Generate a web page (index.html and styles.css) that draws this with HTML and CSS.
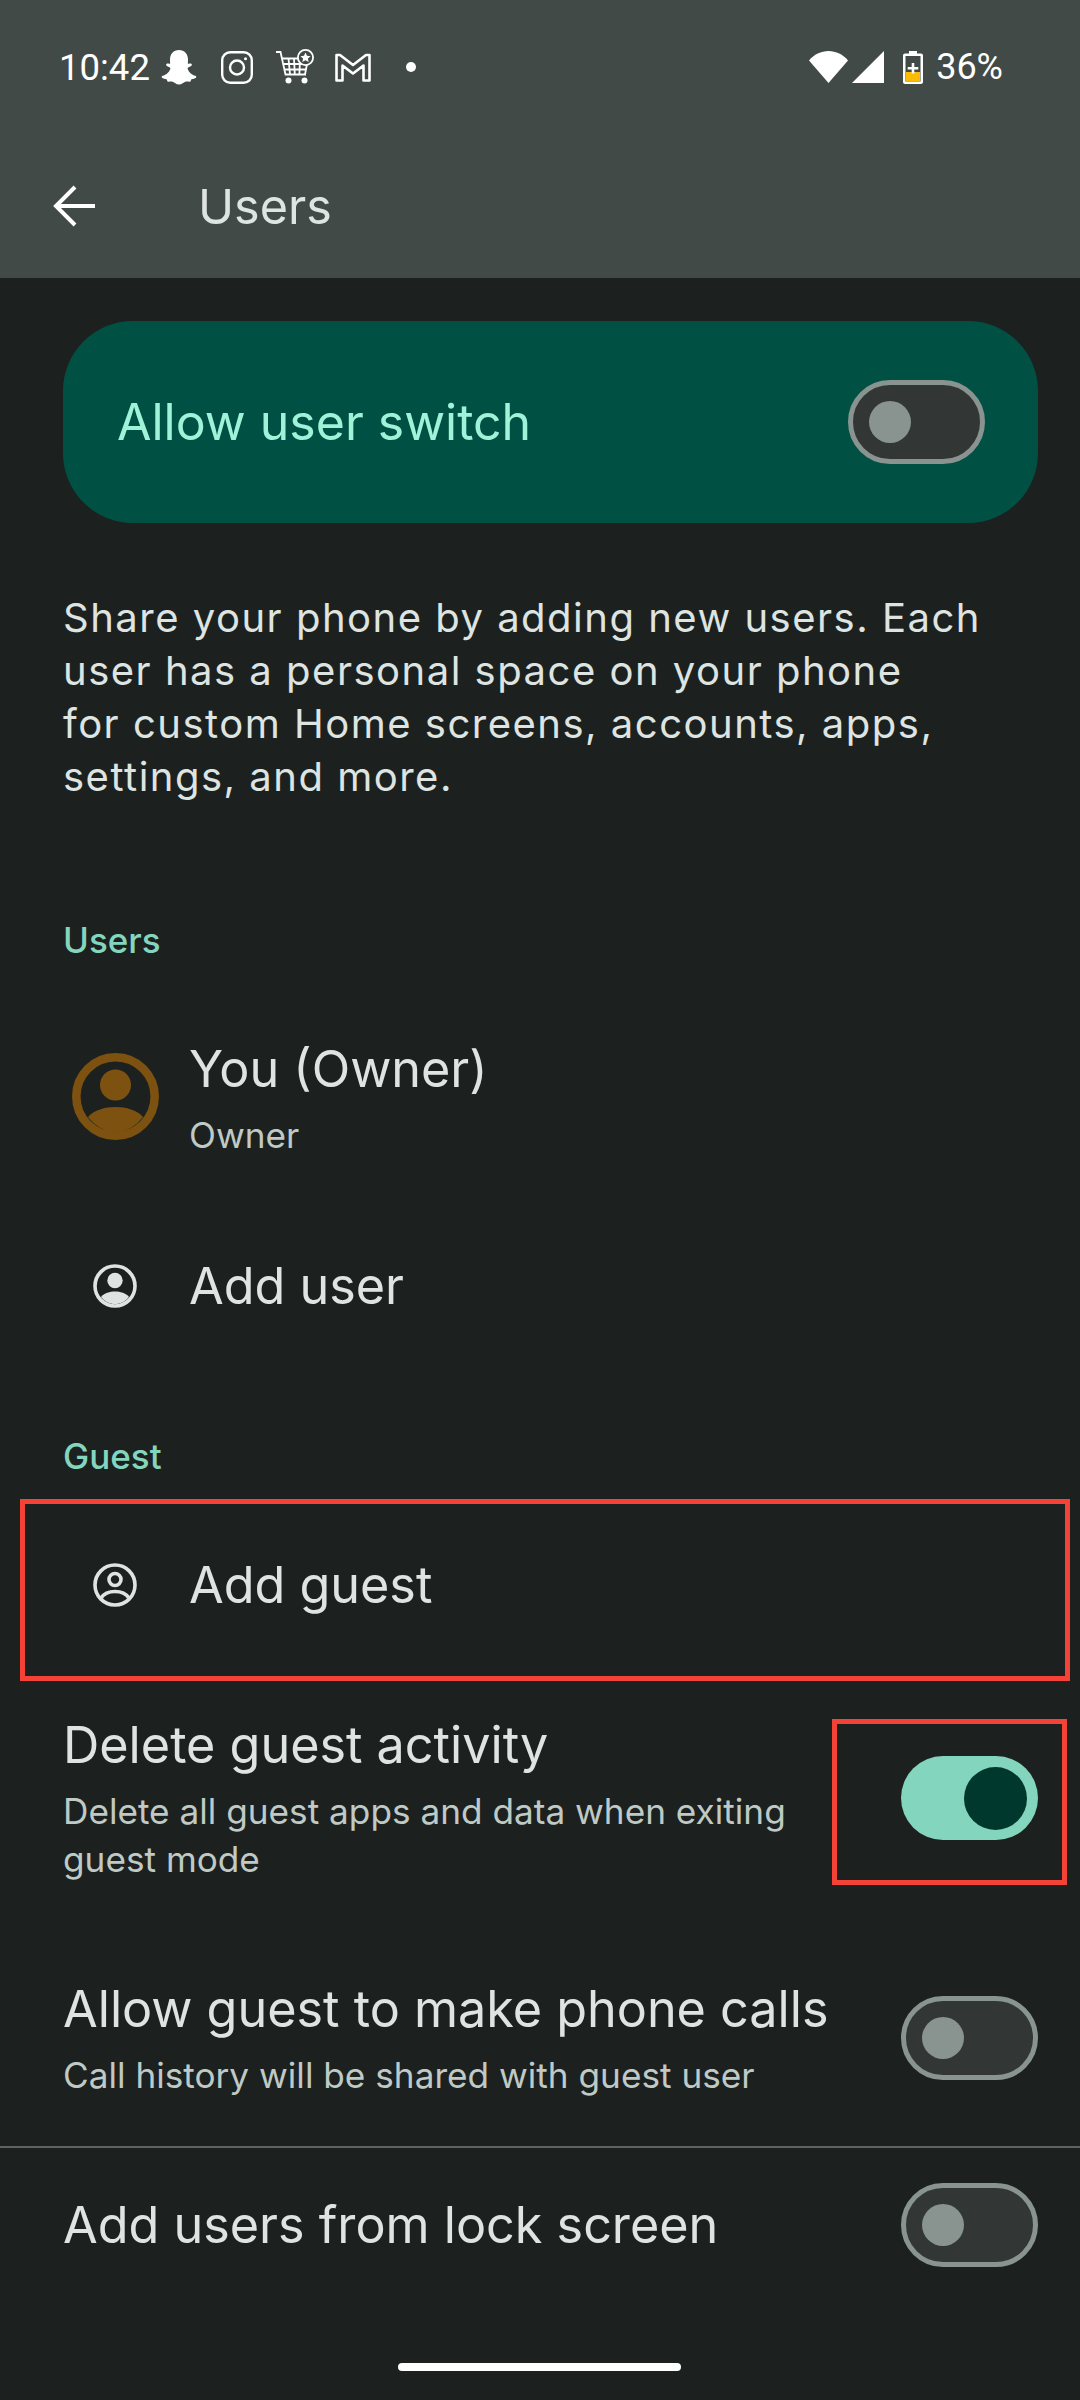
FILE: index.html
```html
<!DOCTYPE html>
<html lang="en">
<head>
    <meta charset="utf-8" />
    <title>Users</title>
    <link rel="stylesheet" href="styles.css">
</head>
<body>
    <header class="appbar">
        <div class="statusbar">
            <div class="status-left">
                <span class="clock">10:42</span>
                <!-- snapchat -->
                <svg class="ic-snap" viewBox="0 0 36 36"><path fill="#fff" d="M18 1c5.500 0 9 4 9 9.500 0 1.500-.1 3-.2 4 1.300.6 2.500-.4 3.500.2 1 .7.600 1.800-.6 2.500-1.200.6-3.300 1-3.100 2.300.5 2.600 3.600 6.300 7.500 7.300 1.200.3 1.600 1.100.9 1.900-.9 1-3.200 1.100-4.500 1.500-.7.300-.5 2.300-1.400 2.500-1.200.3-2.800-.5-4.700 0-2 .5-3.400 2.800-6.400 2.800s-4.400-2.300-6.400-2.800c-1.900-.5-3.500.3-4.700 0-.9-.2-.7-2.200-1.400-2.500-1.300-.4-3.600-.5-4.500-1.500-.7-.8-.3-1.600.9-1.900 3.900-1 7-4.700 7.500-7.300.2-1.300-1.900-1.700-3.100-2.300-1.200-.7-1.600-1.800-.6-2.500 1-.6 2.200.4 3.500-.2-.1-1-.2-2.500-.2-4C9 5 12.500 1 18 1z"/></svg>
                <!-- instagram -->
                <svg class="ic-insta" viewBox="0 0 32 33" fill="none" stroke="#fff" stroke-width="2.400"><rect x="1.200" y="1.200" width="29.600" height="30.600" rx="8"/><circle cx="16" cy="16.500" r="7"/><circle cx="24.500" cy="7.800" r="1.500" fill="#fff" stroke="none"/></svg>
                <!-- cart with star badge -->
                <svg class="ic-cart" viewBox="0 0 38 36" fill="none" stroke="#fff" stroke-width="1.800"><path d="M0 3h4.500l5 22.500h20.500"/><path d="M6 9.500h20M7.300 15h24M8.500 20.500h21.500M12.500 9.500l1.500 16M18 9.500l.8 16M24 10l-.6 15.500M31 15l-2 10.500"/><circle cx="12.500" cy="31.500" r="3" fill="#fff" stroke="none"/><circle cx="28.500" cy="31.500" r="3" fill="#fff" stroke="none"/><circle cx="29.500" cy="8.500" r="7.600" fill="#414a47" stroke="#fff"/><path fill="#fff" stroke="none" d="M29.500 3.500l1.500 3.300 3.600.4-2.700 2.400.8 3.500-3.200-1.800-3.200 1.800.8-3.500-2.700-2.400 3.600-.4z"/></svg>
                <!-- gmail -->
                <svg class="ic-gmail" viewBox="0 0 36 29" fill="none" stroke="#fff" stroke-width="2.600" stroke-linejoin="round"><path d="M1.500 2h3.500l13 10L31 2h3.500v25.500h-6V12.500l-10.500 8-10.500-8v15h-6z"/></svg>
                <span class="dot"></span>
            </div>
            <div class="status-right">
                <svg class="ic-wifi" viewBox="0 0 39 32"><path fill="#fff" d="M0 9.500C5 3.500 12 0 19.500 0S34 3.500 39 9.500L19.500 32z"/></svg>
                <svg class="ic-signal" viewBox="0 0 32 32"><path fill="#fff" d="M32 0v32H0z"/></svg>
                <svg class="ic-battery" viewBox="0 0 20 33"><path fill="#fff" d="M6 0h8v2.500h4c1.100 0 2 .9 2 2V31c0 1.100-.9 2-2 2H2c-1.100 0-2-.9-2-2V4.500c0-1.100.9-2 2-2h4z"/><rect x="2.500" y="5" width="15" height="25.500" fill="#414a47"/><rect x="3" y="21" width="14" height="9.500" fill="#fbbc04"/><path fill="#fff" d="M8.700 12h2.600v4h4v2.600h-4v4H8.700v-4h-4V16h4z"/></svg>
                <span class="battery-text">36%</span>
            </div>
        </div>
        <div class="toolbar">
            <svg class="ic-back" viewBox="0 0 42 42" fill="none" stroke="#fff" stroke-width="4"><path d="M42 21H3M22 2L3 21l19 19"/></svg>
            <h1>Users</h1>
        </div>
    </header>

    <main>
        <div class="switch-card">
            <span>Allow user switch</span>
            <div class="toggle"><i></i></div>
        </div>

        <p class="intro">Share your phone by adding new users. Each<br>user has a personal space on your phone<br>for custom Home screens, accounts, apps,<br>settings, and more.</p>

        <h2 class="section section-users">Users</h2>
        <div class="row row-owner">
            <div class="row-icon">
                <svg class="ic-owner" viewBox="0 0 87 87"><circle cx="43.500" cy="43.500" r="39.200" fill="none" stroke="#7d5210" stroke-width="8.500"/><circle cx="43.500" cy="32" r="15.500" fill="#7d5210"/><path fill="#7d5210" d="M16 64c6-7 17-10 27.500-10S65 57 71 64c-7 9-17 15-27.500 15S23 73 16 64z"/></svg>
            </div>
            <div class="owner-text">
                <div class="row-title">You (Owner)</div>
                <div class="row-sub">Owner</div>
            </div>
        </div>
        <div class="row row-adduser">
            <div class="row-icon">
                <svg class="ic-user" viewBox="0 0 44 44"><circle cx="22" cy="22" r="20" fill="none" stroke="#dee4e1" stroke-width="3.600"/><circle cx="22" cy="16.500" r="7.700" fill="#dee4e1"/><path fill="#dee4e1" d="M8 33c3-4 9-5.500 14-5.500S33 29 36 33c-3.500 4.500-8.500 7-14 7S11.500 37.500 8 33z"/></svg>
            </div>
            <div class="row-title">Add user</div>
        </div>

        <h2 class="section section-guest">Guest</h2>
        <div class="row row-addguest">
            <div class="row-icon">
                <svg class="ic-user" viewBox="0 0 44 44" fill="none" stroke="#dee4e1" stroke-width="3.600"><circle cx="22" cy="22" r="20"/><circle cx="22" cy="16.500" r="6"/><path d="M8 35c3-4.500 9-6.500 14-6.500S33 30.500 36 35"/></svg>
            </div>
            <div class="row-title">Add guest</div>
        </div>

        <div class="pref pref-delete">
            <div>
                <div class="row-title">Delete guest activity</div>
                <div class="row-sub">Delete all guest apps and data when exiting<br>guest mode</div>
            </div>
            <div class="toggle on"><i></i></div>
        </div>
        <div class="pref pref-calls">
            <div>
                <div class="row-title">Allow guest to make phone calls</div>
                <div class="row-sub">Call history will be shared with guest user</div>
            </div>
            <div class="toggle"><i></i></div>
        </div>
        <hr class="divider">
        <div class="pref pref-lock">
            <div class="row-title">Add users from lock screen</div>
            <div class="toggle"><i></i></div>
        </div>
    </main>

    <div class="home-bar"></div>

    <div class="mark mark-guest"></div>
    <div class="mark mark-toggle"></div>
</body>
</html>
```

FILE: styles.css
```css
/* Global */
html, body {
    margin: 0;
    padding: 0;
}

body {
    position: relative;
    width: 1080px;
    height: 2400px;
    overflow: hidden;
    background-color: #1c2120;
    font-family: Inter, Roboto, sans-serif;
    color: #dee4e1;
}

svg {
    display: block;
    flex: none;
}

/* Header */
.appbar {
    height: 278px;
    background-color: #414a47;
}

.statusbar {
    display: flex;
    justify-content: space-between;
    align-items: center;
    height: 134px;
    padding: 0 77px 0 59px;
    color: #fff;
    font-family: Roboto, sans-serif;
}

.status-left, .status-right {
    display: flex;
    align-items: center;
}

.clock {
    font-size: 36.500px;
    width: 102px;
}

.ic-snap { width: 36px; height: 36px; }
.ic-insta { width: 32px; height: 33px; margin-left: 24px; }
.ic-cart { width: 38px; height: 36px; margin-left: 23px; }
.ic-gmail { width: 36px; height: 29px; margin-left: 21px; }

.dot {
    width: 10px;
    height: 10px;
    margin-left: 35px;
    border-radius: 50%;
    background-color: #fff;
}

.ic-wifi { width: 39px; height: 32px; }
.ic-signal { width: 32px; height: 32px; margin-left: 4px; }
.ic-battery { width: 20px; height: 33px; margin-left: 19px; }

.battery-text {
    font-size: 36px;
    margin-left: 13px;
}

.toolbar {
    display: flex;
    align-items: center;
    height: 144px;
    padding-left: 53px;
}

.ic-back { width: 42px; height: 42px; }

.toolbar h1 {
    margin: 0 0 0 103px;
    font-size: 48.500px;
    font-weight: 400;
}

/* Main switch card */
main {
    padding-top: 43px;
}

.switch-card {
    display: flex;
    justify-content: space-between;
    align-items: center;
    height: 202px;
    margin: 0 42px 0 63px;
    padding: 0 53px 0 54px;
    border-radius: 70px;
    background-color: #005143;
    font-size: 50px;
    color: #a0f2d9;
}

/* Toggles */
.toggle {
    box-sizing: border-box;
    display: flex;
    align-items: center;
    flex: none;
    width: 137px;
    height: 84px;
    padding-left: 16px;
    border: 5px solid #899390;
    border-radius: 42px;
    background-color: #323735;
}

.toggle i {
    width: 42px;
    height: 42px;
    border-radius: 50%;
    background-color: #899390;
}

.toggle.on {
    justify-content: flex-end;
    padding: 0 11px 0 0;
    border: none;
    background-color: #84d5be;
}

.toggle.on i {
    width: 63px;
    height: 63px;
    background-color: #00382d;
}

/* Text blocks */
.intro {
    margin: 68px 0 0 63px;
    font-size: 40px;
    line-height: 53px;
    letter-spacing: 1.500px;
}

.section {
    margin: 0 0 0 63px;
    font-size: 35px;
    line-height: 40px;
    font-weight: 500;
    color: #84d5be;
}

.section-users { margin-top: 117px; }
.section-guest { margin-top: 58px; }

/* Rows */
.row {
    display: flex;
    align-items: center;
    padding-left: 63px;
}

.row-icon {
    display: flex;
    justify-content: center;
    width: 104px;
    margin-right: 22px;
}

.ic-owner { width: 87px; height: 87px; }
.ic-user { width: 44px; height: 44px; }

.row-title {
    font-size: 50.300px;
    line-height: 64px;
}

.row-sub {
    margin-top: 10px;
    font-size: 35.200px;
    line-height: 48px;
    color: #bfc9c5;
}

.owner-text { padding-top: 3px; }

.row-owner { height: 172px; margin-top: 50px; }
.row-adduser { height: 184px; margin-top: 12px; }
.row-addguest { height: 178px; margin-top: 20px; }

/* Preferences with a toggle */
.pref {
    display: flex;
    justify-content: space-between;
    align-items: center;
    padding: 0 42px 0 63px;
}

.pref-delete { height: 178px; margin-top: 35px; }
.pref-calls { height: 150px; margin-top: 76px; }
.pref-lock { height: 154px; }

.divider {
    height: 2px;
    margin: 33px 0 0;
    border: none;
    background-color: #5c6462;
}

/* Gesture bar */
.home-bar {
    position: absolute;
    left: 398px;
    top: 2363px;
    width: 283px;
    height: 8px;
    border-radius: 4px;
    background-color: #fff;
}

/* Red annotation boxes laid over the screenshot */
.mark {
    position: absolute;
    box-sizing: border-box;
    border: 5px solid #f44336;
}

.mark-guest {
    left: 20px;
    top: 1499px;
    width: 1050px;
    height: 182px;
}

.mark-toggle {
    left: 832px;
    top: 1719px;
    width: 235px;
    height: 166px;
}
```
